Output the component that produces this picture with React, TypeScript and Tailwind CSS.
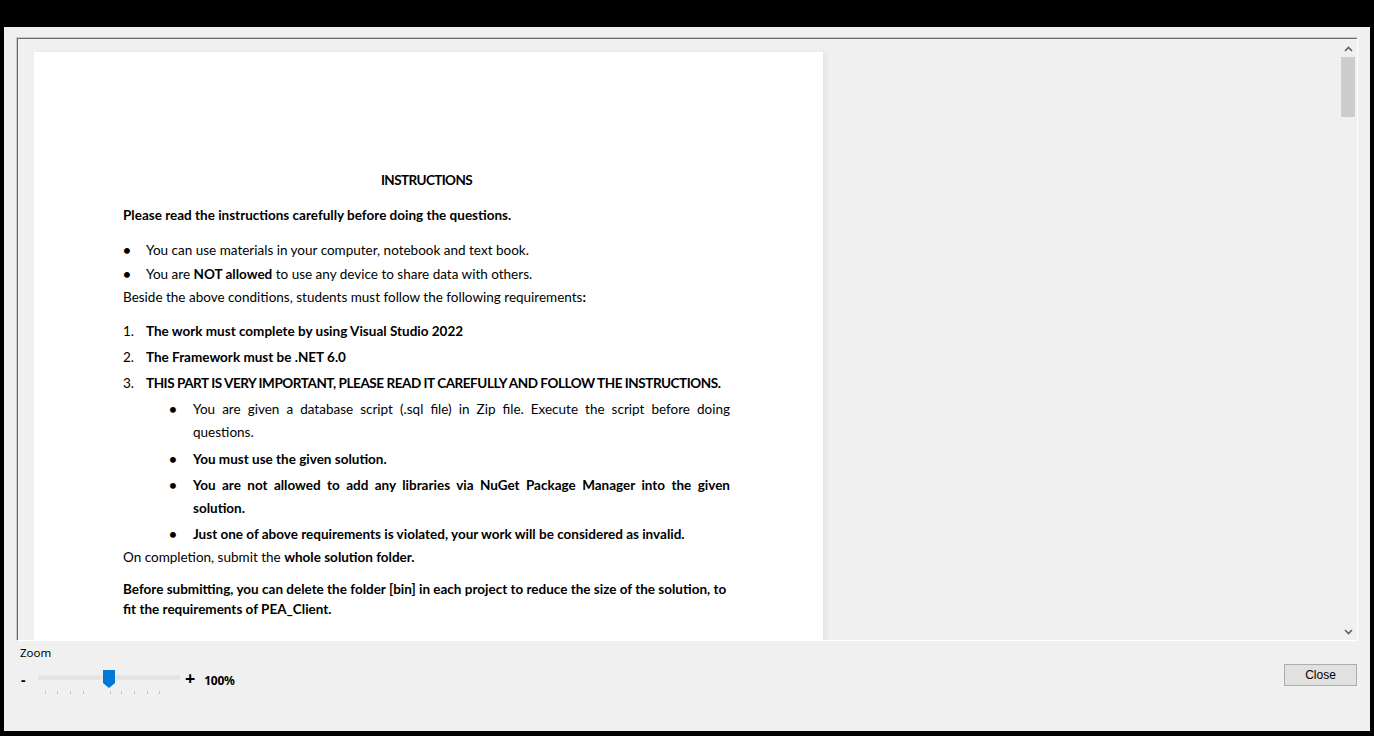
import React from 'react';

const lineH = 'h-[23px] leading-[23px]';

function Bullet({ children }: { children: React.ReactNode }) {
  return (
    <div className={`flex ${lineH} whitespace-nowrap`}>
      <span className="w-[23px] font-bold">•</span>
      <span>{children}</span>
    </div>
  );
}

function SubBullet({ children }: { children: React.ReactNode }) {
  return (
    <div className="flex">
      <span className={`w-[24px] font-bold ${lineH}`}>•</span>
      <div>{children}</div>
    </div>
  );
}

function JustLine({ children, bold = false }: { children: React.ReactNode; bold?: boolean }) {
  return (
    <div className={`w-[537px] ${lineH} text-justify [text-align-last:justify] ${bold ? 'font-bold' : ''}`}>{children}</div>
  );
}

function Chevron({ up }: { up: boolean }) {
  return (
    <svg width="9" height="6" viewBox="0 0 9 6" className="block">
      <path
        d={up ? 'M1 5 L4.5 1.5 L8 5' : 'M1 1 L4.5 4.5 L8 1'}
        fill="none"
        stroke="#606060"
        strokeWidth="1.6"
      />
    </svg>
  );
}

function Slider() {
  const ticks = [9, 21, 34, 47, 74, 85, 98, 111, 123];
  return (
    <svg width="146" height="32" viewBox="0 0 146 32" className="block">
      <rect x="3" y="12" width="140" height="3" fill="#e7e7e7" stroke="#d6d6d6" strokeWidth="0.6" />
      {ticks.map((t) => (
        <line key={t} x1={t + 0.5} x2={t + 0.5} y1="27" y2="30" stroke="#c4c4c4" strokeWidth="1" />
      ))}
      <path d="M67 6 H79 V19 L73 24 L67 19 Z" fill="#0078d7" />
    </svg>
  );
}

export default function App() {
  return (
    <div className="w-[1374px] h-[736px] bg-black pt-[27px] pl-[4px] overflow-hidden">
      <div className="w-[1366px] h-[704px] bg-[#f0f0f0] flex flex-col pt-[10px] pl-[12px]">
        {/* document viewer */}
        <div className="w-[1342px] h-[604px] border-t border-l border-[#c9c9c9] border-r border-r-white border-b border-b-white">
          <div className="w-full h-full flex border-t border-l border-[#6a6a6a] overflow-hidden">
            <div className="flex-1 overflow-hidden">
              <div className="ml-[16px] mt-[13px] w-[789px] h-[620px] bg-white pl-[89px] pt-[117px] shadow-[3px_0_6px_rgba(0,0,0,0.05)] font-['Lato',sans-serif] text-[13.5px] text-black">
                <p className={`w-[607px] text-center font-bold tracking-[-0.6px] ${lineH}`}>INSTRUCTIONS</p>
                <p className={`mt-[12px] font-bold ${lineH} whitespace-nowrap`}>
                  Please read the instructions carefully before doing the questions.
                </p>
                <div className="mt-[12px]">
                  <Bullet>You can use materials in your computer, notebook and text book.</Bullet>
                  <div className="mt-[1px]">
                    <Bullet>
                      You are <b>NOT allowed</b> to use any device to share data with others.
                    </Bullet>
                  </div>
                </div>
                <p className={`${lineH} whitespace-nowrap`}>
                  Beside the above conditions, students must follow the following requirements<b>:</b>
                </p>
                <div className="mt-[11px] font-bold">
                  <div className={`flex ${lineH} whitespace-nowrap`}>
                    <span className="w-[23px] font-normal">1.</span>
                    <span>The work must complete by using Visual Studio 2022</span>
                  </div>
                  <div className={`flex mt-[3px] ${lineH} whitespace-nowrap`}>
                    <span className="w-[23px] font-normal">2.</span>
                    <span>The Framework must be .NET 6.0</span>
                  </div>
                  <div className={`flex mt-[3px] ${lineH} whitespace-nowrap`}>
                    <span className="w-[23px] font-normal">3.</span>
                    <span className="tracking-[-0.45px]">
                      THIS PART IS VERY IMPORTANT, PLEASE READ IT CAREFULLY AND FOLLOW THE INSTRUCTIONS.
                    </span>
                  </div>
                </div>
                <div className="mt-[3px] pl-[46px]">
                  <SubBullet>
                    <JustLine>You are given a database script (.sql file) in Zip file. Execute the script before doing</JustLine>
                    <div className={lineH}>questions.</div>
                  </SubBullet>
                  <div className="mt-[4px]">
                    <SubBullet>
                      <div className={`font-bold ${lineH}`}>You must use the given solution.</div>
                    </SubBullet>
                  </div>
                  <div className="mt-[3px]">
                    <SubBullet>
                      <JustLine bold>You are not allowed to add any libraries via NuGet Package Manager into the given</JustLine>
                      <div className={`font-bold ${lineH}`}>solution.</div>
                    </SubBullet>
                  </div>
                  <div className="mt-[3px]">
                    <SubBullet>
                      <div className={`font-bold ${lineH} whitespace-nowrap`}>
                        Just one of above requirements is violated, your work will be considered as invalid.
                      </div>
                    </SubBullet>
                  </div>
                </div>
                <p className={`${lineH} whitespace-nowrap`}>
                  On completion, submit the <b>whole solution folder.</b>
                </p>
                <p className="mt-[10px] font-bold leading-[20px] whitespace-nowrap">
                  Before submitting, you can delete the folder [bin] in each project to reduce the size of the solution, to
                  <br />
                  fit the requirements of PEA_Client.
                </p>
              </div>
            </div>
            {/* scrollbar */}
            <div className="w-[17px] h-full flex flex-col bg-[#f0f0f0]">
              <div className="h-[18px] flex items-center justify-center pt-[2px]">
                <Chevron up />
              </div>
              <div className="ml-[1px] w-[14px] h-[60px] bg-[#cdcdcd]" />
              <div className="flex-1" />
              <div className="h-[17px] flex items-center justify-center">
                <Chevron up={false} />
              </div>
            </div>
          </div>
        </div>

        {/* bottom bar */}
        <div className="flex pr-[13px] font-['Noto_Sans',sans-serif] text-black">
          <div className="pl-[4px]">
            <div className="mt-[4px] h-[16px] leading-[16px] text-[11.5px]">Zoom</div>
            <div className="mt-[3px] flex items-center h-[32px]">
              <span className="w-[16px] text-[14px] font-bold leading-none pl-[1px]">-</span>
              <Slider />
              <span className="ml-[3px] text-[18px] font-bold leading-none pb-[4px]">+</span>
              <span className="ml-[9px] text-[12px] font-bold pt-[1px] tracking-[-0.3px]">100%</span>
            </div>
          </div>
          <button className="ml-auto mt-[23px] w-[73px] h-[22px] bg-[#e1e1e1] border border-[#adadad] text-[12px] leading-[20px] font-['Liberation_Sans',sans-serif] text-black">
            Close
          </button>
        </div>
      </div>
    </div>
  );
}
